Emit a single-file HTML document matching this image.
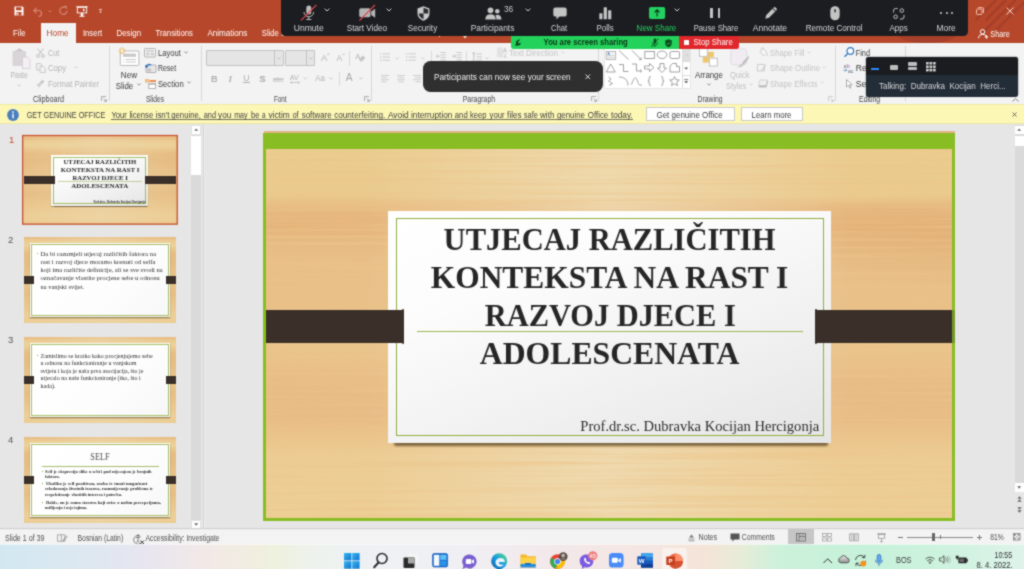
<!DOCTYPE html>
<html lang="hr">
<head>
<meta charset="utf-8">
<title>PowerPoint</title>
<style>
*{box-sizing:border-box;margin:0;padding:0}
html,body{width:1024px;height:569px;overflow:hidden;background:#e6e6e6}
body{font-family:"Liberation Sans",sans-serif;font-size:8.5px;color:#444}
#root{position:relative;width:1024px;height:569px;overflow:hidden;background:#e6e6e6}
#root div,#root svg{position:absolute}
#root svg{overflow:visible}
.t{left:0;top:0;white-space:nowrap;line-height:1;transform-origin:0 0}
#root{will-change:transform;filter:url(#soft)}
.wood{background:
 linear-gradient(90deg,rgba(240,222,184,0) 0%,rgba(240,222,184,0) 15%,rgba(240,222,184,.75) 50%,rgba(240,222,184,0) 85%,rgba(240,222,184,0) 100%),
 radial-gradient(ellipse 30% 13% at 100% 25%,rgba(218,164,106,.32),rgba(218,164,106,0) 100%),
 linear-gradient(180deg,#ebcc8f 0%,#eaca8d 12.6%,#e8bf85 14.6%,#e6b87f 16.5%,#e5b57c 21%,#e7ba82 25%,#e8bf87 30%,#e8c088 43%,#e9c48b 53%,#e9c189 58%,#e8bc85 64%,#e8bc85 73%,#eac48b 78%,#eccc93 83%,#edcf96 100%)}
.woodt{background:
 linear-gradient(90deg,rgba(238,218,178,0) 0%,rgba(238,218,178,.45) 50%,rgba(238,218,178,0) 100%),
 linear-gradient(180deg,#e7b981 0%,#e9c189 2.5%,#ebcd92 5%,#ecd097 10%,#e6bd83 19%,#e5bb81 27%,#e7c188 40%,#e8c48a 53%,#e6be85 66%,#e9c68c 79%,#ecce96 91%,#ebcc92 100%)}
.grain{filter:url(#grain);opacity:.7}
.card{background:linear-gradient(160deg,#ffffff 0%,#fcfcfc 30%,#f1f1f1 65%,#e5e5e5 100%)}
</style>
</head>
<body>
<div id="root">
<svg width="0" height="0" style="left:0;top:0"><filter id="soft" x="0" y="0" width="100%" height="100%" color-interpolation-filters="sRGB"><feConvolveMatrix order="3" kernelMatrix="1 2 1 2 10 2 1 2 1" divisor="22" edgeMode="duplicate" preserveAlpha="true"/></filter><filter id="grain" x="0" y="0" width="100%" height="100%"><feTurbulence type="fractalNoise" baseFrequency="0.003 0.30" numOctaves="3" seed="7" result="n"/><feColorMatrix in="n" type="matrix" values="0 0 0 0 0.84  0 0 0 0 0.56  0 0 0 0 0.26  0 2.4 0 0 -1.05"/></filter></svg>
<div style="left:0px;top:0px;width:1024px;height:43px;background:#b7472a;"></div>
<svg style="left:960px;top:0px;overflow:hidden" width="64" height="43" viewBox="0 0 64 43"><g stroke="#a5402a" stroke-width="2.600" stroke-linecap="butt"><path d="M15.800 20.100L35.900 0M25.500 20.500L46 0M21 34.500L55.500 0M35.500 31L64 2.500"/></g></svg>
<svg style="left:896px;top:36px;" width="62" height="7" viewBox="0 0 62 7"><path d="M2 0h58c-6 5-14 7-29 7s-23-2-29-7z" fill="#a5402a"/></svg>
<div style="left:40.6px;top:23px;width:35.4px;height:21px;background:#f3f3f3;"></div>
<svg style="left:14px;top:6px;" width="10" height="10" viewBox="0 0 10 10"><path d="M0.5 0.5h8l1 1v8h-9z" fill="#fff"/><rect x="2" y="1.3" width="5.5" height="3" fill="#b7472a"/><rect x="2.5" y="6" width="5" height="3.5" fill="#b7472a"/><rect x="3.2" y="6.8" width="1.3" height="2" fill="#fff"/></svg>
<svg style="left:33px;top:6.5px;" width="10" height="9" viewBox="0 0 10 9"><path d="M3.5 0.8L0.8 3.5L3.5 6.2M1 3.5h4.5a3 3 0 0 1 0 6" fill="none" stroke="#d58a76" stroke-width="1.1"/></svg>
<svg style="left:47.5px;top:9.5px;" width="4" height="3" viewBox="0 0 4 3"><path d="M0.5 0.5L2 2L3.5 0.5" fill="none" stroke="#d58a76" stroke-width=".8"/></svg>
<svg style="left:59px;top:6px;" width="9" height="9" viewBox="0 0 9 9"><path d="M6.2 1.6A3.6 3.6 0 1 0 8 4.8" fill="none" stroke="#d58a76" stroke-width="1.1"/><path d="M4.8 0.3h2.7v2.7" fill="none" stroke="#d58a76" stroke-width="1"/></svg>
<svg style="left:76px;top:5.5px;" width="12" height="11" viewBox="0 0 12 11"><path d="M0.3 0.8h11.4" stroke="#fff" stroke-width="1"/><rect x="1.3" y="1.3" width="9.4" height="5.6" fill="none" stroke="#fff" stroke-width=".9"/><path d="M6 7v2M3.5 10.3h5" stroke="#fff" stroke-width="1"/><circle cx="6" cy="8.6" r="1.5" fill="#fff"/><path d="M7 2.6l2.3 1.5L7 5.6z" fill="#fff"/></svg>
<svg style="left:98.5px;top:9px;" width="3" height="5" viewBox="0 0 3 5"><path d="M0.2 0.6h2.6" stroke="#fff" stroke-width=".9"/><path d="M0.2 2.4h2.6L1.5 4z" fill="#fff"/></svg>
<div class="t" style="transform:translate(13.10px,28.90px) scaleX(0.8929);font-size:8.6px;color:#fff;">File</div>
<div class="t" style="transform:translate(46.50px,28.90px) scaleX(0.9674);font-size:8.6px;color:#b7472a;">Home</div>
<div class="t" style="transform:translate(83.00px,28.90px) scaleX(0.8864);font-size:8.6px;color:#fff;">Insert</div>
<div class="t" style="transform:translate(116.40px,28.90px) scaleX(0.9259);font-size:8.6px;color:#fff;">Design</div>
<div class="t" style="transform:translate(155.60px,28.90px) scaleX(0.8952);font-size:8.6px;color:#fff;">Transitions</div>
<div class="t" style="transform:translate(207.40px,28.90px) scaleX(0.9395);font-size:8.6px;color:#fff;">Animations</div>
<div class="t" style="transform:translate(261.80px,28.90px) scaleX(0.8884);font-size:8.6px;color:#fff;">Slide Show</div>
<svg style="left:975.5px;top:6.5px;" width="8" height="8" viewBox="0 0 8 8"><rect x="0.5" y="2" width="5.5" height="5.5" rx="1" fill="none" stroke="#f0c0b0" stroke-width="1"/><path d="M2.2 0.6h4a1.3 1.3 0 0 1 1.3 1.3v4" fill="none" stroke="#f0c0b0" stroke-width="1"/></svg>
<svg style="left:1005.5px;top:6.5px;" width="8" height="8" viewBox="0 0 8 8"><path d="M0.5 0.5l7 7M7.5 0.5l-7 7" stroke="#f4d0c4" stroke-width="1"/></svg>
<svg style="left:978px;top:28.5px;" width="11" height="10" viewBox="0 0 11 10"><circle cx="4.6" cy="2.8" r="2.2" fill="none" stroke="#fff" stroke-width="1"/><path d="M0.6 9.3c0-2.6 1.8-4 4-4s4 1.4 4 4" fill="none" stroke="#fff" stroke-width="1"/><path d="M8.5 6.2v3.4M6.8 7.9h3.4" stroke="#fff" stroke-width="1"/></svg>
<div class="t" style="transform:translate(990.30px,30.20px) scaleX(0.8478);font-size:8.6px;color:#fff;">Share</div>
<div style="left:0px;top:43px;width:1024px;height:61px;background:#f3f3f3;"></div>
<div style="left:109px;top:46px;width:1px;height:55px;background:#d6d6d6;"></div>
<div style="left:200.6px;top:46px;width:1px;height:55px;background:#d6d6d6;"></div>
<div style="left:371.3px;top:46px;width:1px;height:55px;background:#d6d6d6;"></div>
<div style="left:597.5px;top:46px;width:1px;height:55px;background:#d6d6d6;"></div>
<div style="left:835.3px;top:46px;width:1px;height:55px;background:#d6d6d6;"></div>
<div style="left:904.5px;top:46px;width:1px;height:55px;background:#d6d6d6;"></div>
<svg style="left:12px;top:48px;" width="19" height="21" viewBox="0 0 19 21"><rect x="0.5" y="3" width="13.5" height="15" rx="0.8" fill="#d8d4d8"/><path d="M3.5 3.2h7.5v-1.2h-2a1.7 1.7 0 0 0-3.4 0h-2z" fill="#c9c5c9"/><path d="M10.5 9h5l2.5 2.5v9h-7.5z" fill="#f3eff3" stroke="#d0ccd0" stroke-width=".8"/></svg>
<div class="t" style="transform:translate(10.40px,70.60px) scaleX(0.7909);font-size:8.6px;color:#b4b4b4;">Paste</div>
<svg style="left:17px;top:83.5px;" width="4" height="3" viewBox="0 0 4 3"><path d="M0.4 0.5L2 2.2L3.6 0.5" fill="none" stroke="#c0c0c0" stroke-width=".8"/></svg>
<svg style="left:35.5px;top:47.5px;" width="9" height="10" viewBox="0 0 9 10"><path d="M1.6 0.5l5 6.3M7.4 0.5l-5 6.3" stroke="#b8b8b8" stroke-width=".9" fill="none"/><circle cx="2" cy="8" r="1.5" fill="none" stroke="#b8b8b8" stroke-width=".8"/><circle cx="7" cy="8" r="1.5" fill="none" stroke="#b8b8b8" stroke-width=".8"/></svg>
<div class="t" style="transform:translate(47.90px,48.70px) scaleX(0.8500);font-size:8.6px;color:#b4b4b4;">Cut</div>
<svg style="left:35.5px;top:63px;" width="10" height="10" viewBox="0 0 10 10"><path d="M0.5 0.5h4l1.5 1.5v5h-5.500z" fill="#eee" stroke="#c2c2c2" stroke-width=".8"/><path d="M4 3.5h3.500l1.800 1.800v4.200h-5.300z" fill="#f1f1f1" stroke="#c2c2c2" stroke-width=".8"/></svg>
<div class="t" style="transform:translate(47.90px,64.10px) scaleX(0.9050);font-size:8.6px;color:#b4b4b4;">Copy</div>
<svg style="left:73.5px;top:66px;" width="4" height="3" viewBox="0 0 4 3"><path d="M0.4 0.5L2 2.2L3.6 0.5" fill="none" stroke="#c6c6c6" stroke-width=".8"/></svg>
<svg style="left:36px;top:79px;" width="9" height="9" viewBox="0 0 9 9"><path d="M6.5 0.8l1.800 1.800l-2.700 2.700l-1.800-1.800z" fill="#c4c4c4"/><path d="M0.6 6l3-2.400l2 2l-2.600 3z" fill="#cfcfcf"/></svg>
<div class="t" style="transform:translate(47.90px,79.60px) scaleX(0.9000);font-size:8.6px;color:#b4b4b4;">Format Painter</div>
<div class="t" style="transform:translate(33.00px,95.50px) scaleX(0.8857);font-size:8.2px;color:#444;">Clipboard</div>
<svg style="left:101px;top:96px;" width="6" height="6" viewBox="0 0 6 6"><path d="M0.5 5V0.500h4.500" fill="none" stroke="#9a9a9a" stroke-width=".8"/><path d="M2.300 2.300l3 3M5.400 3v2.400h-2.400" fill="none" stroke="#9a9a9a" stroke-width=".8"/></svg>
<svg style="left:117.5px;top:46.5px;" width="22" height="19" viewBox="0 0 22 19"><rect x="2.300" y="4" width="18.600" height="14.500" rx="1" fill="#fff" stroke="#b9b9b9" stroke-width="1"/><rect x="5" y="6.600" width="13" height="3.200" fill="#c8c8c8"/><path d="M5.200 12.500h1M7.500 12.500h10.500M5.200 15h1M7.500 15h10.500" stroke="#c4c4c4" stroke-width=".9"/><g stroke="#eaa43a" stroke-width=".9"><path d="M4 0.300v7M0.500 3.800h7M1.500 1.300l5 5M6.500 1.300l-5 5"/></g><circle cx="4" cy="3.800" r="1.500" fill="#fff6df"/></svg>
<div class="t" style="transform:translate(120.80px,70.80px) scaleX(0.9412);font-size:8.6px;color:#3b3b3b;">New</div>
<div class="t" style="transform:translate(115.70px,81.50px) scaleX(0.9158);font-size:8.6px;color:#3b3b3b;">Slide</div>
<svg style="left:136.5px;top:83.3px;" width="4" height="3" viewBox="0 0 4 3"><path d="M0.400 0.500L2 2.200L3.600 0.500" fill="none" stroke="#777" stroke-width=".8"/></svg>
<svg style="left:144px;top:48px;" width="12" height="9.5" viewBox="0 0 12 9.5"><rect x="0.500" y="0.500" width="11" height="8.500" rx=".8" fill="#f7f7f7" stroke="#a9a9a9" stroke-width=".9"/><rect x="2" y="2" width="8" height="1.500" fill="#c9c9c9"/><rect x="2" y="4.500" width="3.500" height="3" fill="#d0d0d0"/><rect x="6.500" y="4.500" width="3.500" height="3" fill="#d0d0d0"/></svg>
<div class="t" style="transform:translate(157.90px,48.90px) scaleX(0.8885);font-size:8.6px;color:#3b3b3b;">Layout</div>
<svg style="left:183.8px;top:50.7px;" width="4" height="3" viewBox="0 0 4 3"><path d="M0.400 0.500L2 2.200L3.600 0.500" fill="none" stroke="#777" stroke-width=".8"/></svg>
<svg style="left:144.5px;top:62.5px;" width="11.5" height="10" viewBox="0 0 11.5 10"><rect x="1" y="2" width="10" height="7.500" rx=".8" fill="#e8e8e8" stroke="#a9a9a9" stroke-width=".9"/><rect x="2.200" y="5.500" width="4" height="3" fill="#c4c4c4"/><path d="M1 4.500a3 3 0 0 1 5-2.300" fill="none" stroke="#2f6fc0" stroke-width="1.200"/><path d="M0 2l1.200 3l2.600-1.400z" fill="#2f6fc0"/></svg>
<div class="t" style="transform:translate(157.90px,64.10px) scaleX(0.8130);font-size:8.6px;color:#3b3b3b;">Reset</div>
<svg style="left:144.5px;top:78.5px;" width="11.5" height="10" viewBox="0 0 11.5 10"><rect x="0.300" y="0.500" width="3.500" height="2.600" fill="#f6c48a" stroke="#e8a55a" stroke-width=".5"/><rect x="4.500" y="1" width="6.500" height="2" fill="#ee8a50"/><rect x="3.800" y="4.500" width="6.700" height="5" fill="#fff" stroke="#a9a9a9" stroke-width=".9"/><rect x="3.800" y="4.500" width="6.700" height="1.300" fill="#b9b9b9"/></svg>
<div class="t" style="transform:translate(157.90px,79.60px) scaleX(0.9000);font-size:8.6px;color:#3b3b3b;">Section</div>
<svg style="left:186.6px;top:81.3px;" width="4" height="3" viewBox="0 0 4 3"><path d="M0.400 0.500L2 2.200L3.600 0.500" fill="none" stroke="#777" stroke-width=".8"/></svg>
<div class="t" style="transform:translate(145.90px,95.50px) scaleX(0.8091);font-size:8.2px;color:#444;">Slides</div>
<div style="left:206.4px;top:50.2px;width:77.2px;height:15.6px;background:#e5e5e5;border:1px solid #c3c3c3;border-radius:1px"></div>
<div style="left:274.3px;top:50.2px;width:1px;height:15.6px;background:#c3c3c3;"></div>
<svg style="left:276.8px;top:57px;" width="4" height="3" viewBox="0 0 4 3"><path d="M0.400 0.500L2 2.200L3.600 0.500" fill="none" stroke="#b5b5b5" stroke-width=".8"/></svg>
<div style="left:284.7px;top:50.2px;width:30.3px;height:15.6px;background:#e5e5e5;border:1px solid #c3c3c3;border-radius:1px"></div>
<div style="left:306.2px;top:50.2px;width:1px;height:15.6px;background:#c3c3c3;"></div>
<svg style="left:308.5px;top:57px;" width="4" height="3" viewBox="0 0 4 3"><path d="M0.400 0.500L2 2.200L3.600 0.500" fill="none" stroke="#b5b5b5" stroke-width=".8"/></svg>
<div class="t" style="transform:translate(321.00px,53.00px);font-size:9.5px;color:#b4b4b4;">A</div>
<svg style="left:326.5px;top:52.5px;" width="3" height="3" viewBox="0 0 3 3"><path d="M0.300 2L1.500 0.600L2.700 2" fill="none" stroke="#b4b4b4" stroke-width=".7"/></svg>
<div class="t" style="transform:translate(336.50px,54.00px);font-size:8.5px;color:#b4b4b4;">A</div>
<svg style="left:341.5px;top:52.5px;" width="3" height="3" viewBox="0 0 3 3"><path d="M0.300 0.600L1.500 2L2.700 0.600" fill="none" stroke="#b4b4b4" stroke-width=".7"/></svg>
<div style="left:349.3px;top:51px;width:1px;height:14.5px;background:#dadada;"></div>
<div class="t" style="transform:translate(355.20px,52.50px);font-size:7.5px;color:#b4b4b4;">A</div>
<svg style="left:357.5px;top:54.5px;" width="8" height="8" viewBox="0 0 8 8"><path d="M4.800 0.500l2.600 2.600l-4 4l-2.600-2.600z" fill="#c6c6c6"/></svg>
<div class="t" style="transform:translate(211.00px,74.60px);font-size:9.2px;font-weight:700;color:#b0b0b0;">B</div>
<div class="t" style="transform:translate(228.50px,74.60px);font-size:9.2px;font-family:'Liberation Serif',serif;font-weight:700;font-style:italic;color:#b0b0b0;">I</div>
<div class="t" style="transform:translate(243.20px,74.20px);font-size:8.6px;color:#b0b0b0;">U</div>
<div style="left:242.8px;top:82.1px;width:6.8px;height:0.9px;background:#b0b0b0;"></div>
<div class="t" style="transform:translate(259.20px,74.60px);font-size:9.2px;font-weight:700;color:#b0b0b0;text-shadow:0.600px 0.600px 0.5px #ccc;">S</div>
<div class="t" style="transform:translate(273.00px,75.60px) scaleX(0.8750);font-size:7.5px;color:#b8b8b8;text-decoration:line-through;">abc</div>
<div class="t" style="transform:translate(289.80px,74.00px) scaleX(0.9200);font-size:7.8px;color:#b4b4b4;">AV</div>
<svg style="left:289.5px;top:81px;" width="10" height="3" viewBox="0 0 10 3"><path d="M0.500 1.500h9M2 0.300L0.500 1.500L2 2.700M8 0.300L9.500 1.500L8 2.700" fill="none" stroke="#b8b8b8" stroke-width=".7"/></svg>
<svg style="left:303px;top:77px;" width="4" height="3" viewBox="0 0 4 3"><path d="M0.400 0.500L2 2.200L3.600 0.500" fill="none" stroke="#c6c6c6" stroke-width=".8"/></svg>
<div class="t" style="transform:translate(315.20px,74.40px) scaleX(0.8909);font-size:8.8px;color:#b4b4b4;">Aa</div>
<svg style="left:328.5px;top:77px;" width="4" height="3" viewBox="0 0 4 3"><path d="M0.400 0.500L2 2.200L3.600 0.500" fill="none" stroke="#c0c0c0" stroke-width=".8"/></svg>
<div style="left:339.3px;top:72px;width:1px;height:14px;background:#dadada;"></div>
<div class="t" style="transform:translate(345.80px,73.40px);font-size:10.2px;color:#a8a8a8;">A</div>
<svg style="left:359.3px;top:77px;" width="4" height="3" viewBox="0 0 4 3"><path d="M0.400 0.500L2 2.200L3.600 0.500" fill="none" stroke="#c0c0c0" stroke-width=".8"/></svg>
<div class="t" style="transform:translate(274.00px,95.50px) scaleX(0.7647);font-size:8.2px;color:#444;">Font</div>
<svg style="left:364px;top:96px;" width="6" height="6" viewBox="0 0 6 6"><path d="M0.5 5V0.500h4.500" fill="none" stroke="#9a9a9a" stroke-width=".8"/><path d="M2.300 2.300l3 3M5.400 3v2.400h-2.400" fill="none" stroke="#9a9a9a" stroke-width=".8"/></svg>
<div style="left:438.6px;top:36.3px;width:1px;height:1px;background:#f3d9d0;"></div>
<svg style="left:463.3px;top:36.2px;" width="4" height="2.5" viewBox="0 0 4 2.5"><path d="M0 0h4L2 2.400z" fill="#f6e3dc"/></svg>
<svg style="left:380px;top:52.8px;" width="11" height="10" viewBox="0 0 11 10"><rect x="0" y="0.30" width="1.200" height="1.200" fill="#c6c6c6"/><path d="M2.5 0.80h7.5" stroke="#c6c6c6" stroke-width=".9"/><rect x="0" y="3.50" width="1.200" height="1.200" fill="#c6c6c6"/><path d="M2.5 4.00h7.5" stroke="#c6c6c6" stroke-width=".9"/><rect x="0" y="6.70" width="1.200" height="1.200" fill="#c6c6c6"/><path d="M2.5 7.20h7.5" stroke="#c6c6c6" stroke-width=".9"/></svg>
<svg style="left:395.3px;top:57px;" width="4" height="3" viewBox="0 0 4 3"><path d="M0.400 0.500L2 2.200L3.600 0.500" fill="none" stroke="#c6c6c6" stroke-width=".8"/></svg>
<svg style="left:405.5px;top:52.8px;" width="11" height="10" viewBox="0 0 11 10"><rect x="0" y="0.30" width="1.200" height="1.200" fill="#c6c6c6"/><path d="M2.5 0.80h7.5" stroke="#c6c6c6" stroke-width=".9"/><rect x="0" y="3.50" width="1.200" height="1.200" fill="#c6c6c6"/><path d="M2.5 4.00h7.5" stroke="#c6c6c6" stroke-width=".9"/><rect x="0" y="6.70" width="1.200" height="1.200" fill="#c6c6c6"/><path d="M2.5 7.20h7.5" stroke="#c6c6c6" stroke-width=".9"/></svg>
<svg style="left:421.3px;top:57px;" width="4" height="3" viewBox="0 0 4 3"><path d="M0.400 0.500L2 2.200L3.600 0.500" fill="none" stroke="#c6c6c6" stroke-width=".8"/></svg>
<div style="left:431px;top:51px;width:1px;height:14.5px;background:#dadada;"></div>
<svg style="left:381px;top:75px;" width="9" height="8" viewBox="0 0 9 8"><path d="M0 0.50h8" stroke="#c9c9c9" stroke-width=".9"/><path d="M0 2.60h6" stroke="#c9c9c9" stroke-width=".9"/><path d="M0 4.70h8" stroke="#c9c9c9" stroke-width=".9"/><path d="M0 6.80h5.5" stroke="#c9c9c9" stroke-width=".9"/></svg>
<svg style="left:397px;top:75px;" width="9" height="8" viewBox="0 0 9 8"><path d="M0 0.50h8" stroke="#c9c9c9" stroke-width=".9"/><path d="M1 2.60h6" stroke="#c9c9c9" stroke-width=".9"/><path d="M0 4.70h8" stroke="#c9c9c9" stroke-width=".9"/><path d="M1.3 6.80h5.5" stroke="#c9c9c9" stroke-width=".9"/></svg>
<svg style="left:413px;top:75px;" width="9" height="8" viewBox="0 0 9 8"><path d="M0 0.50h8" stroke="#c9c9c9" stroke-width=".9"/><path d="M2 2.60h6" stroke="#c9c9c9" stroke-width=".9"/><path d="M0 4.70h8" stroke="#c9c9c9" stroke-width=".9"/><path d="M2.5 6.80h5.5" stroke="#c9c9c9" stroke-width=".9"/></svg>
<svg style="left:436px;top:52px;" width="10" height="8.5" viewBox="0 0 10 8.5"><path d="M4.500 0.500h5.500M4.500 3h5.500M4.500 5.500h5.500M4.500 8h5.500" stroke="#c6c6c6" stroke-width=".9"/><path d="M3.800 4.200H0.500M2 2.600L0.400 4.200L2 5.800" fill="none" stroke="#b8b8b8" stroke-width=".8"/></svg>
<svg style="left:452px;top:52px;" width="10" height="8.5" viewBox="0 0 10 8.5"><path d="M4.500 0.500h5.500M4.500 3h5.500M4.500 5.500h5.500M4.500 8h5.500" stroke="#c6c6c6" stroke-width=".9"/><path d="M0.200 4.200H3.500M2 2.600L3.600 4.200L2 5.800" fill="none" stroke="#b8b8b8" stroke-width=".8"/></svg>
<div style="left:466.3px;top:51px;width:1px;height:14.5px;background:#dadada;"></div>
<svg style="left:471.5px;top:51.5px;" width="10" height="10.5" viewBox="0 0 10 10.5"><path d="M4.500 2h5.500M4.500 5h5.500M4.500 8h5.500" stroke="#c6c6c6" stroke-width=".9"/><path d="M1.800 0.500v9.500M0.400 2L1.800 0.500L3.200 2M0.400 8.500L1.800 10L3.200 8.500" fill="none" stroke="#b8b8b8" stroke-width=".8"/></svg>
<svg style="left:485.3px;top:57px;" width="4" height="3" viewBox="0 0 4 3"><path d="M0.400 0.500L2 2.200L3.600 0.500" fill="none" stroke="#c6c6c6" stroke-width=".8"/></svg>
<svg style="left:496.5px;top:47px;" width="10" height="11" viewBox="0 0 10 11"><path d="M1 0.500v10M3 0.500v10M5 0.500v10" stroke="#c9c9c9" stroke-width=".8"/><path d="M6.300 5.500l1.700-4.500l1.700 4.500M6.900 4h2.200M8 6.500v4M7 9.300l1 1.200l1-1.200" fill="none" stroke="#c0c0c0" stroke-width=".8"/></svg>
<div class="t" style="transform:translate(509.00px,48.80px) scaleX(0.9423);font-size:8.6px;color:#c4c4c4;">Text Direction</div>
<svg style="left:560.5px;top:50.7px;" width="4" height="3" viewBox="0 0 4 3"><path d="M0.400 0.500L2 2.200L3.600 0.500" fill="none" stroke="#cfcfcf" stroke-width=".8"/></svg>
<svg style="left:497px;top:62px;" width="10" height="10" viewBox="0 0 10 10"><rect x="0.500" y="0.500" width="9" height="9" fill="none" stroke="#c6c6c6" stroke-width=".8" stroke-dasharray="2 1"/><path d="M5 1.500v7M3.800 3L5 1.600L6.200 3M3.800 7L5 8.400L6.200 7" fill="none" stroke="#c0c0c0" stroke-width=".8"/></svg>
<div class="t" style="transform:translate(509.00px,64.10px) scaleX(0.9459);font-size:8.6px;color:#c4c4c4;">Align Text</div>
<svg style="left:547px;top:66px;" width="4" height="3" viewBox="0 0 4 3"><path d="M0.400 0.500L2 2.200L3.600 0.500" fill="none" stroke="#cfcfcf" stroke-width=".8"/></svg>
<svg style="left:497px;top:78px;" width="10" height="9" viewBox="0 0 10 9"><rect x="2.500" y="2.500" width="7" height="6" fill="none" stroke="#c6c6c6" stroke-width=".8"/><path d="M0.500 4l2-2.500l2 2.500z" fill="#c9c9c9"/></svg>
<div class="t" style="transform:translate(509.00px,79.60px) scaleX(0.8947);font-size:8.6px;color:#c4c4c4;">Convert to SmartArt</div>
<svg style="left:580px;top:81.3px;" width="4" height="3" viewBox="0 0 4 3"><path d="M0.400 0.500L2 2.200L3.600 0.500" fill="none" stroke="#cfcfcf" stroke-width=".8"/></svg>
<div class="t" style="transform:translate(462.70px,95.50px) scaleX(0.8500);font-size:8.2px;color:#444;">Paragraph</div>
<svg style="left:590.5px;top:96px;" width="6" height="6" viewBox="0 0 6 6"><path d="M0.5 5V0.500h4.500" fill="none" stroke="#9a9a9a" stroke-width=".8"/><path d="M2.300 2.300l3 3M5.400 3v2.400h-2.400" fill="none" stroke="#9a9a9a" stroke-width=".8"/></svg>
<div style="left:603.5px;top:48px;width:87.5px;height:40.5px;background:#fff;border:1px solid #e6e6e6"></div>
<div style="left:681.5px;top:48px;width:1px;height:40.5px;background:#dcdcdc;"></div>
<div style="left:682.5px;top:49px;width:7.5px;height:12px;background:#e0e0e0;"></div>
<div style="left:682.5px;top:61px;width:7.5px;height:1px;background:#dcdcdc;"></div>
<div style="left:682.5px;top:74.5px;width:7.5px;height:1px;background:#dcdcdc;"></div>
<svg style="left:684.5px;top:53.5px;" width="4" height="3" viewBox="0 0 4 3"><path d="M0.4 2.2L2 0.6L3.6 2.2" fill="none" stroke="#c4c4c4" stroke-width=".8"/></svg>
<svg style="left:684.3px;top:66.5px;" width="4.4" height="3" viewBox="0 0 4.4 3"><path d="M0.2 0.4h4L2.2 2.8z" fill="#666"/></svg>
<svg style="left:684.3px;top:78.5px;" width="4.4" height="5" viewBox="0 0 4.4 5"><path d="M0.2 0.5h4" stroke="#666" stroke-width=".8"/><path d="M0.2 2h4L2.2 4.4z" fill="#666"/></svg>
<svg style="left:603.5px;top:48px;" width="80" height="41" viewBox="0 0 80 41">
<rect x="2.2" y="3.5" width="9.5" height="8" fill="#f4f4f4" stroke="#a8a8a8" stroke-width=".8"/><path d="M3.5 7.5h7M3.500 9.500h7" stroke="#c4c4c4" stroke-width=".7"/><text x="3.600" y="6.600" font-family="Liberation Sans, sans-serif" font-size="3.500" fill="#2f6fc0">A</text>
<path d="M15 2.500l9.500 9" fill="none" stroke="#8a8a8a" stroke-width=".8"/>
<path d="M28 2.500l9 9M37.200 11.700v-2.200M37.200 11.700h-2.200" fill="none" stroke="#8a8a8a" stroke-width=".8"/>
<rect x="40.800" y="3.500" width="9.500" height="7" fill="none" stroke="#8a8a8a" stroke-width=".8"/>
<ellipse cx="58" cy="6.800" rx="4.800" ry="3.800" fill="none" stroke="#8a8a8a" stroke-width=".8"/>
<rect x="66" y="3.500" width="9.500" height="7" rx="1.500" fill="none" stroke="#8a8a8a" stroke-width=".8"/>
<path d="M2.200 24l4.500-8l4.500 8z" fill="none" stroke="#8a8a8a" stroke-width=".8"/>
<path d="M15 16.500h4.500v7h5" fill="none" stroke="#8a8a8a" stroke-width=".8"/>
<path d="M28 16h4.500v7h5M36 21.500l1.600 1.500l-1.600 1.500" fill="none" stroke="#8a8a8a" stroke-width=".8"/>
<path d="M40.500 18h5v-2.500l4.500 4l-4.500 4v-2.500h-5z" fill="none" stroke="#8a8a8a" stroke-width=".8"/>
<path d="M56 15.500h4v4.500h2.500l-4.500 4.500l-4.500-4.500h2.500z" fill="none" stroke="#8a8a8a" stroke-width=".8"/>
<path d="M66 24v-6l2.500-2.500h4v3h3v5.500z" fill="none" stroke="#8a8a8a" stroke-width=".8"/>
<path d="M4.500 29l2.500 2l-2.500 2l4 2.500l-3 1.500M5.500 37.500l1.500-1.500" fill="none" stroke="#8a8a8a" stroke-width=".8"/>
<path d="M15 29c5 0 9 2.500 9 8.500" fill="none" stroke="#8a8a8a" stroke-width=".8"/>
<path d="M27.500 36.500c3.500-10 5-7 6.500-2c1 3 2 2.800 4 2.500" fill="none" stroke="#8a8a8a" stroke-width=".8"/>
<path d="M47 28.500c-2 0-1.800 1-1.800 2.500s0 2-1.300 2c1.300 0 1.300 0.500 1.300 2s-0.200 2.500 1.800 2.500" fill="none" stroke="#8a8a8a" stroke-width=".8"/>
<path d="M57 28.500c2 0 1.800 1 1.800 2.500s0 2 1.300 2c-1.300 0-1.300 0.500-1.300 2s0.200 2.500-1.800 2.500" fill="none" stroke="#8a8a8a" stroke-width=".8"/>
<path d="M70.500 28.500l1.400 3.200l3.400 0.300l-2.600 2.200l0.800 3.400l-3-1.800l-3 1.800l0.800-3.400l-2.600-2.200l3.400-0.300z" fill="none" stroke="#8a8a8a" stroke-width=".8"/>
</svg>
<svg style="left:699px;top:48.3px;" width="20" height="19" viewBox="0 0 20 19"><rect x="8.800" y="3.800" width="6" height="5.600" fill="#edc56c"/><rect x="3.800" y="9" width="6" height="5.600" fill="#edc56c"/><rect x="0.500" y="0.500" width="7.800" height="7.800" fill="#fff" stroke="#b4b4b4" stroke-width=".8"/><rect x="10.500" y="10.200" width="7.800" height="7.800" fill="#fff" stroke="#b4b4b4" stroke-width=".8"/></svg>
<div class="t" style="transform:translate(695.00px,70.60px) scaleX(0.9100);font-size:8.6px;color:#3b3b3b;">Arrange</div>
<svg style="left:707px;top:83.3px;" width="4" height="3" viewBox="0 0 4 3"><path d="M0.4 0.5L2 2.2L3.6 0.5" fill="none" stroke="#777" stroke-width=".8"/></svg>
<svg style="left:730px;top:48px;" width="20" height="21" viewBox="0 0 20 21"><rect x="0.800" y="0.800" width="16" height="16" rx="3" fill="#f0ecf1" stroke="#dcd8dd" stroke-width=".8"/><path d="M19.500 7.500c-3 2-5.500 5-7.500 8l1.500 1.200c2.500-2.500 5-5.500 6-9.200z" fill="#bcbcbc"/><path d="M12 15.500l1.500 1.200c-1.500 2.500-4.500 3-7 2.500c2.500-0.500 3.500-2 5.500-3.700z" fill="#c6c6c6"/></svg>
<div class="t" style="transform:translate(729.90px,70.60px) scaleX(0.8955);font-size:8.6px;color:#c0c0c0;">Quick</div>
<div class="t" style="transform:translate(726.00px,81.50px) scaleX(0.8696);font-size:8.6px;color:#c0c0c0;">Styles</div>
<svg style="left:748.6px;top:83.3px;" width="4" height="3" viewBox="0 0 4 3"><path d="M0.4 0.5L2 2.2L3.6 0.5" fill="none" stroke="#cccccc" stroke-width=".8"/></svg>
<svg style="left:758px;top:47px;" width="10" height="10" viewBox="0 0 10 10"><path d="M2 4.500l3.500-3l3.500 4l-3.500 3.500z" fill="#f6f6f6" stroke="#c2c2c2" stroke-width=".8"/><path d="M3 2.500c0-2.500 2.500-2.500 2.500-0.500" fill="none" stroke="#c2c2c2" stroke-width=".7"/><path d="M9.300 6.500c0.800 1.200 0.800 2 0 2.300c-0.800-0.300-0.800-1.100 0-2.300z" fill="#c8c8c8"/></svg>
<div class="t" style="transform:translate(770.00px,48.80px) scaleX(0.9000);font-size:8.6px;color:#c4c4c4;">Shape Fill</div>
<svg style="left:806.8px;top:50.7px;" width="4" height="3" viewBox="0 0 4 3"><path d="M0.4 0.5L2 2.2L3.6 0.5" fill="none" stroke="#d0d0d0" stroke-width=".8"/></svg>
<svg style="left:757px;top:62.5px;" width="11" height="9" viewBox="0 0 11 9"><path d="M0.500 1.500h7v6.500h-7z" fill="none" stroke="#c4c4c4" stroke-width=".8"/><path d="M10 0.500l-5 5.500l-1 1.800l1.800-1z" fill="#c0c0c0"/></svg>
<div class="t" style="transform:translate(770.00px,64.10px) scaleX(0.9185);font-size:8.6px;color:#c4c4c4;">Shape Outline</div>
<svg style="left:822px;top:66px;" width="4" height="3" viewBox="0 0 4 3"><path d="M0.4 0.5L2 2.2L3.6 0.5" fill="none" stroke="#d0d0d0" stroke-width=".8"/></svg>
<svg style="left:757.5px;top:78.5px;" width="10.5" height="9.5" viewBox="0 0 10.5 9.5"><path d="M2 1h7.500l-1.500 5.500h-7.500z" fill="#f1eff2" stroke="#c8c8c8" stroke-width=".7"/><path d="M0.500 6.500h7.500l1.500-5.500l0.500 2l-1.500 5.500h-7.500z" fill="#bdbdbd"/></svg>
<div class="t" style="transform:translate(770.00px,79.60px) scaleX(0.8906);font-size:8.6px;color:#c4c4c4;">Shape Effects</div>
<svg style="left:820px;top:81.3px;" width="4" height="3" viewBox="0 0 4 3"><path d="M0.4 0.5L2 2.2L3.6 0.5" fill="none" stroke="#d0d0d0" stroke-width=".8"/></svg>
<div class="t" style="transform:translate(697.50px,95.50px) scaleX(0.8333);font-size:8.2px;color:#444;">Drawing</div>
<svg style="left:827.5px;top:96px;" width="6" height="6" viewBox="0 0 6 6"><path d="M0.5 5V0.5h4.5" fill="none" stroke="#c4c4c4" stroke-width=".8"/><path d="M2.3 2.3l3 3M5.400 3v2.400h-2.400" fill="none" stroke="#c4c4c4" stroke-width=".8"/></svg>
<svg style="left:843.5px;top:47.3px;" width="10.5" height="10.5" viewBox="0 0 10.5 10.5"><circle cx="6.300" cy="4" r="3.300" fill="#fff" stroke="#2e74c2" stroke-width="1.200"/><path d="M3.800 6.500L0.500 9.800" stroke="#2e74c2" stroke-width="1.300"/></svg>
<div class="t" style="transform:translate(855.80px,48.70px) scaleX(0.8471);font-size:8.6px;color:#3b3b3b;">Find</div>
<svg style="left:843px;top:62.5px;" width="11" height="10" viewBox="0 0 11 10"><text x="0.500" y="4.800" font-family="Liberation Sans, sans-serif" font-size="5.500" fill="#777">a</text><text x="3.700" y="4.800" font-family="Liberation Sans, sans-serif" font-size="5.500" fill="#9a58c0">b</text><text x="4.800" y="9.500" font-family="Liberation Sans, sans-serif" font-size="5.500" fill="#777">a</text><text x="7.800" y="9.500" font-family="Liberation Sans, sans-serif" font-size="5.500" fill="#2e74c2">c</text><path d="M0.500 7.200h3M2.500 6l1.200 1.200l-1.200 1.200" fill="none" stroke="#2e74c2" stroke-width=".7"/></svg>
<div class="t" style="transform:translate(855.80px,64.10px);font-size:8.6px;color:#3b3b3b;">Replace</div>
<svg style="left:845.5px;top:78.5px;" width="7" height="10" viewBox="0 0 7 10"><path d="M0.500 0.500v7.500l2-1.800l1.500 3l1-0.500l-1.400-2.900h2.600z" fill="#fff" stroke="#999" stroke-width=".8"/></svg>
<div class="t" style="transform:translate(855.80px,79.60px);font-size:8.6px;color:#3b3b3b;">Select</div>
<div class="t" style="transform:translate(859.00px,95.50px) scaleX(0.8480);font-size:8.2px;color:#444;">Editing</div>
<svg style="left:1011.5px;top:97.5px;" width="7" height="4" viewBox="0 0 7 4"><path d="M0.500 3.500L3.500 0.600L6.500 3.500" fill="none" stroke="#777" stroke-width=".9"/></svg>
<div style="left:0px;top:104px;width:1024px;height:20px;background:#fdf7b6;border-top:1px solid #f0eaa5;border-bottom:1px solid #ece6a2"></div>
<svg style="left:7.4px;top:108.7px;" width="12" height="12" viewBox="0 0 12 12"><circle cx="6" cy="6" r="5.900" fill="#4a7fbd"/><rect x="5.300" y="4.800" width="1.400" height="4.500" fill="#fff"/><circle cx="6" cy="3.100" r=".9" fill="#fff"/></svg>
<div class="t" style="transform:translate(26.70px,110.80px) scaleX(0.7909);font-size:9.2px;color:#3c3c3c;">GET GENUINE OFFICE</div>
<div class="t" style="transform:translate(111.50px,111.00px) scaleX(0.8750);font-size:8.7px;color:#3c3c3c;">Your</div>
<div class="t" style="transform:translate(129.40px,111.00px) scaleX(0.8778);font-size:8.7px;color:#3c3c3c;">license</div>
<div class="t" style="transform:translate(155.60px,111.00px) scaleX(0.9200);font-size:8.7px;color:#3c3c3c;">isn't</div>
<div class="t" style="transform:translate(171.25px,111.00px) scaleX(0.8894);font-size:8.7px;color:#3c3c3c;">genuine,</div>
<div class="t" style="transform:translate(203.75px,111.00px) scaleX(0.8464);font-size:8.7px;color:#3c3c3c;">and</div>
<div class="t" style="transform:translate(218.10px,111.00px) scaleX(0.9393);font-size:8.7px;color:#3c3c3c;">you</div>
<div class="t" style="transform:translate(234.25px,111.00px) scaleX(0.8088);font-size:8.7px;color:#3c3c3c;">may</div>
<div class="t" style="transform:translate(251.10px,111.00px) scaleX(0.8778);font-size:8.7px;color:#3c3c3c;">be</div>
<div class="t" style="transform:translate(262.00px,111.00px) scaleX(0.7500);font-size:8.7px;color:#3c3c3c;">a</div>
<div class="t" style="transform:translate(268.40px,111.00px) scaleX(0.9591);font-size:8.7px;color:#3c3c3c;">victim</div>
<div class="t" style="transform:translate(292.40px,111.00px) scaleX(0.8563);font-size:8.7px;color:#3c3c3c;">of</div>
<div class="t" style="transform:translate(301.75px,111.00px) scaleX(0.9091);font-size:8.7px;color:#3c3c3c;">software</div>
<div class="t" style="transform:translate(334.25px,111.00px) scaleX(0.9352);font-size:8.7px;color:#3c3c3c;">counterfeiting.</div>
<div class="t" style="transform:translate(387.90px,111.00px) scaleX(0.9690);font-size:8.7px;color:#3c3c3c;">Avoid</div>
<div class="t" style="transform:translate(411.00px,111.00px) scaleX(0.9535);font-size:8.7px;color:#3c3c3c;">interruption</div>
<div class="t" style="transform:translate(454.75px,111.00px) scaleX(0.8929);font-size:8.7px;color:#3c3c3c;">and</div>
<div class="t" style="transform:translate(470.00px,111.00px) scaleX(0.8737);font-size:8.7px;color:#3c3c3c;">keep</div>
<div class="t" style="transform:translate(489.60px,111.00px) scaleX(0.8824);font-size:8.7px;color:#3c3c3c;">your</div>
<div class="t" style="transform:translate(507.10px,111.00px) scaleX(0.9433);font-size:8.7px;color:#3c3c3c;">files</div>
<div class="t" style="transform:translate(523.75px,111.00px) scaleX(0.8594);font-size:8.7px;color:#3c3c3c;">safe</div>
<div class="t" style="transform:translate(540.00px,111.00px) scaleX(0.9333);font-size:8.7px;color:#3c3c3c;">with</div>
<div class="t" style="transform:translate(556.90px,111.00px) scaleX(0.9065);font-size:8.7px;color:#3c3c3c;">genuine</div>
<div class="t" style="transform:translate(587.75px,111.00px) scaleX(0.9091);font-size:8.7px;color:#3c3c3c;">Office</div>
<div class="t" style="transform:translate(610.90px,111.00px) scaleX(0.9500);font-size:8.7px;color:#3c3c3c;">today.</div>
<div style="left:111.3px;top:118.9px;width:521.6px;height:0.8px;background:rgba(60,60,60,.75);"></div>
<div style="left:646px;top:106.6px;width:88.5px;height:14.8px;background:#fff;border:1px solid #c9c9c9"></div>
<div class="t" style="transform:translate(656.50px,110.70px) scaleX(0.9366);font-size:8.5px;color:#3c3c3c;">Get genuine Office</div>
<div style="left:741px;top:106.6px;width:61.5px;height:14.8px;background:#fff;border:1px solid #c9c9c9"></div>
<div class="t" style="transform:translate(751.60px,110.70px) scaleX(0.9163);font-size:8.5px;color:#3c3c3c;">Learn more</div>
<svg style="left:1012px;top:112px;" width="5" height="5" viewBox="0 0 5 5"><path d="M0.500 0.500l4 4M4.500 0.500l-4 4" stroke="#555" stroke-width=".9"/></svg>
<div style="left:190.8px;top:125px;width:9.8px;height:404px;background:#dadada;"></div>
<div style="left:190.8px;top:125px;width:9.8px;height:9.5px;background:#fff;border:1px solid #e2e2e2"></div>
<svg style="left:193.5px;top:128px;" width="4.4" height="3" viewBox="0 0 4.4 3"><path d="M0.200 2.800h4L2.200 0.400z" fill="#666"/></svg>
<div style="left:190.8px;top:136px;width:9.8px;height:38.5px;background:#fff;"></div>
<div style="left:190.8px;top:519.5px;width:9.8px;height:9.3px;background:#fff;border:1px solid #e2e2e2"></div>
<svg style="left:193.5px;top:523px;" width="4.4" height="3" viewBox="0 0 4.4 3"><path d="M0.200 0.300h4L2.200 2.700z" fill="#666"/></svg>
<div style="left:203px;top:124px;width:1.2px;height:405px;background:#d4d4d4;"></div>
<div style="left:204.2px;top:124px;width:1px;height:405px;background:#ececec;"></div>
<div style="left:1014.7px;top:125px;width:10px;height:366.5px;background:#dadada;"></div>
<div style="left:1015px;top:126px;width:9px;height:8.3px;background:#fff;"></div>
<svg style="left:1017px;top:128px;" width="4.4" height="3" viewBox="0 0 4.4 3"><path d="M0.200 2.800h4L2.200 0.400z" fill="#666"/></svg>
<div style="left:1015px;top:136px;width:9px;height:10px;background:#fff;"></div>
<div style="left:1015px;top:482.5px;width:9px;height:9px;background:#fff;"></div>
<svg style="left:1017px;top:485.5px;" width="4.4" height="3" viewBox="0 0 4.4 3"><path d="M0.200 0.300h4L2.200 2.700z" fill="#666"/></svg>
<svg style="left:1016.5px;top:495.5px;" width="5" height="6" viewBox="0 0 5 6"><path d="M0.300 2.800h4.400L2.500 0.300zM0.300 5.800h4.400L2.500 3.300z" fill="#666"/></svg>
<svg style="left:1016.5px;top:506.5px;" width="5" height="6" viewBox="0 0 5 6"><path d="M0.300 0.300h4.400L2.500 2.800zM0.300 3.300h4.400L2.500 5.800z" fill="#666"/></svg>
<svg style="left:21px;top:134px;" width="158" height="92" viewBox="0 0 158 92"><rect x="1" y="0.9" width="155.9" height="89.9" fill="#c9512f"/></svg>
<svg style="left:21px;top:134px;" width="158" height="92" viewBox="0 0 158 92"><rect x="2.35" y="2.25" width="153.2" height="87.2" fill="#ebcd92"/></svg>
<div class="wood woodt" style="left:24px;top:137px;width:152px;height:86px"></div>
<div class="card" style="left:51.400px;top:154.800px;width:96.600px;height:51.100px;box-shadow:0 .6px 1px rgba(60,40,10,.6)"></div>
<div style="left:53.2px;top:156.6px;width:93px;height:47.5px;background:transparent;border:.6px solid rgba(143,174,62,.8)"></div>
<div style="left:23.6px;top:176.4px;width:31px;height:7.7px;background:#3a3029;"></div>
<div style="left:145px;top:176.4px;width:31.3px;height:7.7px;background:#3a3029;"></div>
<div style="left:58px;top:180.8px;width:84px;height:0.7px;background:rgba(143,174,62,.5);"></div>
<div class="t" style="transform:translate(63.50px,158.60px);font-size:6.7px;font-family:'Liberation Serif',serif;font-weight:700;color:#2a2a2a;">UTJECAJ RAZLIČITIH</div>
<div class="t" style="transform:translate(60.70px,166.70px) scaleX(1.0342);font-size:6.7px;font-family:'Liberation Serif',serif;font-weight:700;color:#2a2a2a;">KONTEKSTA NA RAST I</div>
<div class="t" style="transform:translate(72.50px,175.00px);font-size:6.7px;font-family:'Liberation Serif',serif;font-weight:700;color:#2a2a2a;">RAZVOJ DJECE I</div>
<div class="t" style="transform:translate(71.30px,183.00px) scaleX(1.0400);font-size:6.7px;font-family:'Liberation Serif',serif;font-weight:700;color:#2a2a2a;">ADOLESCENATA</div>
<div class="t" style="transform:translate(93.50px,201.30px) scaleX(0.9545);font-size:3.1px;font-family:'Liberation Serif',serif;font-weight:700;color:#333;">Prof.dr.sc. Dubravka Kocijan Hercigonja</div>
<div class="t" style="transform:translate(9.00px,135.30px);font-size:9.5px;color:#c8482c;">1</div>
<div class="wood woodt" style="left:23.700px;top:236.6px;width:152.300px;height:86px"></div>
<div class="card" style="left:30.200px;top:243.0px;width:139.500px;height:73.900px;background:linear-gradient(135deg,#fff 0%,#fdfdfd 60%,#f7f7f7 100%);box-shadow:0 .8px 1.200px rgba(60,40,10,.6)"></div>
<div style="left:31.3px;top:244.1px;width:137.3px;height:71.7px;background:transparent;border:.6px solid rgba(143,174,62,.8)"></div>
<div style="left:23.7px;top:276.3px;width:10.5px;height:7.4px;background:#3a3029;"></div>
<div style="left:166px;top:276.3px;width:10px;height:7.4px;background:#3a3029;"></div>
<div class="t" style="transform:translate(8.00px,235.30px);font-size:9.5px;color:#555;">2</div>
<div style="left:37.3px;top:252.5px;width:1px;height:1px;background:#8fae3e;"></div>
<div class="t" style="transform:translate(40.50px,251.80px) scaleX(1.2211);font-size:5.5px;font-family:'Liberation Serif',serif;color:#333;">Da bi razumjeli  utjecaj različitih faktora na</div>
<div class="t" style="transform:translate(40.50px,260.02px) scaleX(1.2202);font-size:5.5px;font-family:'Liberation Serif',serif;color:#333;">rast i razvoj djece moramo krenuti od selfa</div>
<div class="t" style="transform:translate(40.50px,268.24px) scaleX(1.1961);font-size:5.5px;font-family:'Liberation Serif',serif;color:#333;">koji ima različite definicije, ali se sve svodi na</div>
<div class="t" style="transform:translate(40.50px,276.46px) scaleX(1.2237);font-size:5.5px;font-family:'Liberation Serif',serif;color:#333;">označavanje vlastite procjene sebe u odnosu</div>
<div class="t" style="transform:translate(40.50px,284.68px) scaleX(1.1757);font-size:5.5px;font-family:'Liberation Serif',serif;color:#333;">na vanjski svijet.</div>
<div class="wood woodt" style="left:23.700px;top:336.6px;width:152.300px;height:86px"></div>
<div class="card" style="left:30.200px;top:343.0px;width:139.500px;height:73.900px;background:linear-gradient(135deg,#fff 0%,#fdfdfd 60%,#f7f7f7 100%);box-shadow:0 .8px 1.200px rgba(60,40,10,.6)"></div>
<div style="left:31.3px;top:344.1px;width:137.3px;height:71.7px;background:transparent;border:.6px solid rgba(143,174,62,.8)"></div>
<div style="left:23.7px;top:376.3px;width:10.5px;height:7.4px;background:#3a3029;"></div>
<div style="left:166px;top:376.3px;width:10px;height:7.4px;background:#3a3029;"></div>
<div class="t" style="transform:translate(8.00px,335.30px);font-size:9.5px;color:#555;">3</div>
<div style="left:37.3px;top:355px;width:1px;height:1px;background:#8fae3e;"></div>
<div class="t" style="transform:translate(40.50px,353.80px) scaleX(1.1936);font-size:5.1px;font-family:'Liberation Serif',serif;color:#333;">Zamislimo se kratko kako procjenjujemo sebe</div>
<div class="t" style="transform:translate(40.50px,361.35px) scaleX(1.1938);font-size:5.1px;font-family:'Liberation Serif',serif;color:#333;">u odnosu na funkcioniranje u vanjskom</div>
<div class="t" style="transform:translate(40.50px,368.90px) scaleX(1.1670);font-size:5.1px;font-family:'Liberation Serif',serif;color:#333;">svijetu i koja je naša prva asocijacija, što je</div>
<div class="t" style="transform:translate(40.50px,376.45px) scaleX(1.1905);font-size:5.1px;font-family:'Liberation Serif',serif;color:#333;">utjecalo na naše funkcioniranje (tko, što i</div>
<div class="t" style="transform:translate(40.50px,384.00px) scaleX(1.1917);font-size:5.1px;font-family:'Liberation Serif',serif;color:#333;">kada).</div>
<div class="wood woodt" style="left:23.700px;top:436.6px;width:152.300px;height:86px"></div>
<div class="card" style="left:30.200px;top:443.0px;width:139.500px;height:73.900px;background:linear-gradient(135deg,#fff 0%,#fdfdfd 60%,#f7f7f7 100%);box-shadow:0 .8px 1.200px rgba(60,40,10,.6)"></div>
<div style="left:31.3px;top:444.1px;width:137.3px;height:71.7px;background:transparent;border:.6px solid rgba(143,174,62,.8)"></div>
<div style="left:23.7px;top:476.3px;width:10.5px;height:7.4px;background:#3a3029;"></div>
<div style="left:166px;top:476.3px;width:10px;height:7.4px;background:#3a3029;"></div>
<div class="t" style="transform:translate(8.00px,435.30px);font-size:9.5px;color:#555;">4</div>
<div class="t" style="transform:translate(90.30px,452.90px) scaleX(0.8864);font-size:9.3px;font-family:'Liberation Serif',serif;color:#4a4a4a;">SELF</div>
<div style="left:42px;top:466.2px;width:117px;height:0.8px;background:#a8bd6a;"></div>
<div class="t" style="transform:translate(45.00px,470.60px) scaleX(1.1703);font-size:3.9px;font-family:'Liberation Serif',serif;font-weight:700;color:#333;">Self je ekspresija slike o sebi i pod utjecajem je brojnih</div>
<div style="left:41.5px;top:470.6px;width:0.8px;height:0.8px;background:#8fae3e;"></div>
<div class="t" style="transform:translate(45.00px,475.70px) scaleX(1.1154);font-size:3.9px;font-family:'Liberation Serif',serif;font-weight:700;color:#333;">faktora.</div>
<div class="t" style="transform:translate(46.00px,483.20px) scaleX(1.2000);font-size:3.9px;font-family:'Liberation Serif',serif;font-weight:700;color:#333;">Ukoliko je self pozitivan, osoba će imati mogućnost</div>
<div style="left:41.5px;top:483.2px;width:0.8px;height:0.8px;background:#8fae3e;"></div>
<div class="t" style="transform:translate(45.00px,488.40px) scaleX(1.1453);font-size:3.9px;font-family:'Liberation Serif',serif;font-weight:700;color:#333;">svladavanja životnih izazova, razumijevanje problema te</div>
<div class="t" style="transform:translate(45.00px,493.80px) scaleX(1.1397);font-size:3.9px;font-family:'Liberation Serif',serif;font-weight:700;color:#333;">respektiranje vlastitih interesa i potreba.</div>
<div class="t" style="transform:translate(46.00px,501.80px) scaleX(1.1735);font-size:3.9px;font-family:'Liberation Serif',serif;font-weight:700;color:#333;">Dakle, on je suma stavova koji ovise o našim percepcijama,</div>
<div style="left:41.5px;top:501.8px;width:0.8px;height:0.8px;background:#8fae3e;"></div>
<div class="t" style="transform:translate(45.00px,506.80px) scaleX(1.1351);font-size:3.9px;font-family:'Liberation Serif',serif;font-weight:700;color:#333;">mišljenju i osjećajima.</div>
<div style="left:264px;top:131px;width:691px;height:2.5px;background:#e4b486;"></div>
<div style="left:263px;top:133px;width:692px;height:388.3px;background:#88bd23;"></div>
<div class="wood" style="left:266.1px;top:149.3px;width:685.8px;height:368.6px"></div>
<div class="grain" style="left:266px;top:149px;width:686px;height:369px"></div>
<div style="left:266px;top:310.3px;width:136px;height:32.5px;background:#3a3029;border-radius:0 1px 1px 0"></div>
<div style="left:401.5px;top:308.8px;width:2.3px;height:35.5px;background:#3a3029;border-radius:1px"></div>
<div style="left:817px;top:310.3px;width:138.3px;height:32.5px;background:#3a3029;"></div>
<div style="left:815.2px;top:308.8px;width:2.3px;height:35.5px;background:#3a3029;border-radius:1px"></div>
<div style="left:952px;top:310.3px;width:3px;height:32.5px;background:rgba(136,189,35,.75);"></div>
<div style="left:393.5px;top:440px;width:434px;height:5.6px;background:rgba(85,65,30,.75);filter:blur(1.1px);border-radius:2px"></div>
<div class="card" style="left:388.300px;top:211px;width:443px;height:232px"></div>
<div style="left:395.7px;top:218px;width:428px;height:217.7px;background:transparent;border:1px solid #8fae3e"></div>
<div style="left:266px;top:310.3px;width:136px;height:32.5px;background:#3a3029;"></div>
<div style="left:401.5px;top:308.8px;width:2.3px;height:35.5px;background:#3a3029;border-radius:1px"></div>
<div style="left:815.2px;top:308.8px;width:2.3px;height:35.5px;background:#3a3029;border-radius:1px"></div>
<div style="left:817px;top:310.3px;width:14.5px;height:32.5px;background:#3a3029;"></div>
<div style="left:417px;top:330.5px;width:386px;height:1.3px;background:#9db756;"></div>
<div class="t" style="transform:translate(443.60px,223.60px) scaleX(0.9794);font-size:31.2px;font-family:'Liberation Serif',serif;font-weight:700;color:#262626;">UTJECAJ RAZLIČITIH</div>
<div class="t" style="transform:translate(430.80px,261.60px) scaleX(1.0070);font-size:31.2px;font-family:'Liberation Serif',serif;font-weight:700;color:#262626;">KONTEKSTA NA RAST I</div>
<div class="t" style="transform:translate(484.80px,299.60px) scaleX(0.9743);font-size:31.2px;font-family:'Liberation Serif',serif;font-weight:700;color:#262626;">RAZVOJ DJECE I</div>
<div class="t" style="transform:translate(479.80px,337.60px) scaleX(1.0165);font-size:31.2px;font-family:'Liberation Serif',serif;font-weight:700;color:#262626;">ADOLESCENATA</div>
<div class="t" style="transform:translate(580.30px,418.70px) scaleX(1.0279);font-size:14.2px;font-family:'Liberation Serif',serif;color:#2e2e2e;">Prof.dr.sc. Dubravka Kocijan Hercigonja</div>
<div style="left:0px;top:528.3px;width:1024px;height:1.1px;background:#d0d0d0;"></div>
<div style="left:0px;top:529.4px;width:1024px;height:14.6px;background:#f3f3f3;"></div>
<div style="left:0px;top:529.4px;width:1024px;height:1px;background:#ededed;"></div>
<div class="t" style="transform:translate(5.00px,533.60px) scaleX(0.8362);font-size:8.5px;color:#505050;">Slide 1 of 39</div>
<svg style="left:56.5px;top:534px;" width="10" height="8" viewBox="0 0 10 8"><path d="M0.500 0.800h3.800v6.500h-3.800zM4.300 0.800h3.500v6.500h-3.500" fill="none" stroke="#8a8a8a" stroke-width=".7"/><path d="M9.500 1.500l-3 4l-0.500 1.500l1.500-0.800l3-4" fill="none" stroke="#8a8a8a" stroke-width=".7"/></svg>
<div class="t" style="transform:translate(77.60px,533.60px) scaleX(0.7965);font-size:8.5px;color:#505050;">Bosnian (Latin)</div>
<svg style="left:134px;top:533.5px;" width="11" height="10" viewBox="0 0 11 10"><circle cx="4" cy="1.600" r="1" fill="#555"/><path d="M6.500 2.300a4.300 4.300 0 1 0 1 6" fill="none" stroke="#666" stroke-width=".8"/><path d="M1.800 3.500h4.500M4 3.500v3l-1.500 2M4 6.500l1.500 2" fill="none" stroke="#555" stroke-width=".7"/><path d="M6.500 6.500l3.500 3.500M10 6.500l-3.500 3.500" stroke="#333" stroke-width="1"/></svg>
<div class="t" style="transform:translate(145.50px,533.60px) scaleX(0.8022);font-size:8.5px;color:#505050;">Accessibility: Investigate</div>
<svg style="left:688px;top:533.5px;" width="7" height="8" viewBox="0 0 7 8"><path d="M3.500 0.500l2.500 3h-5z" fill="#777"/><path d="M0.500 5h6M0.500 6.800h6" stroke="#888" stroke-width=".8"/></svg>
<div class="t" style="transform:translate(698.50px,533.40px) scaleX(0.8409);font-size:8.5px;color:#505050;">Notes</div>
<svg style="left:730.3px;top:533px;" width="10" height="9" viewBox="0 0 10 9"><path d="M0.500 0.500h9v6h-5l-2 2v-2h-2z" fill="#555"/></svg>
<div class="t" style="transform:translate(741.80px,533.40px) scaleX(0.8024);font-size:8.5px;color:#505050;">Comments</div>
<div style="left:787.8px;top:529.3px;width:26.4px;height:14.7px;background:#c6c6c6;"></div>
<svg style="left:796px;top:533px;" width="10" height="8.5" viewBox="0 0 10 8.5"><rect x="0.500" y="0.500" width="9" height="7.500" fill="none" stroke="#666" stroke-width=".8"/><path d="M3 0.500v7.500M3 3.500h6.500" stroke="#666" stroke-width=".8"/><path d="M4.500 2h3.500M4.500 5.500h3.500" stroke="#888" stroke-width=".6"/></svg>
<svg style="left:822.4px;top:533px;" width="10" height="8.5" viewBox="0 0 10 8.5"><rect x="0.400" y="0.400" width="3.800" height="3" fill="none" stroke="#9a9a9a" stroke-width=".7"/><rect x="5.600" y="0.400" width="3.800" height="3" fill="none" stroke="#9a9a9a" stroke-width=".7"/><rect x="0.400" y="5" width="3.800" height="3" fill="none" stroke="#9a9a9a" stroke-width=".7"/><rect x="5.600" y="5" width="3.800" height="3" fill="none" stroke="#9a9a9a" stroke-width=".7"/></svg>
<svg style="left:849px;top:533px;" width="10" height="8.5" viewBox="0 0 10 8.5"><path d="M0.500 0.800h4.300v7h-4.300zM5.200 0.800h4.300v7h-4.300z" fill="#e2e2e2" stroke="#9a9a9a" stroke-width=".7"/><path d="M2.600 1v6.500M7.300 1v6.500" stroke="#b0b0b0" stroke-width=".6"/></svg>
<svg style="left:876.5px;top:532.5px;" width="9" height="9.5" viewBox="0 0 9 9.5"><path d="M0.300 0.800h8.400" stroke="#8a8a8a" stroke-width=".8"/><rect x="1.300" y="1.300" width="6.400" height="4" fill="none" stroke="#8a8a8a" stroke-width=".7"/><path d="M4.500 5.500v3M3 8.800h3" stroke="#8a8a8a" stroke-width=".7"/></svg>
<div style="left:898.3px;top:536.7px;width:4.5px;height:0.9px;background:#777;"></div>
<div style="left:906.7px;top:536.8px;width:66.5px;height:0.8px;background:#8a8a8a;"></div>
<div style="left:931.5px;top:532.8px;width:3px;height:8.6px;background:#666;border-radius:.5px"></div>
<div style="left:939.7px;top:535.3px;width:0.8px;height:3.8px;background:#777;"></div>
<div style="left:977px;top:536.7px;width:5px;height:0.9px;background:#777;"></div>
<div style="left:979.05px;top:534.7px;width:0.9px;height:5px;background:#777;"></div>
<div class="t" style="transform:translate(990.30px,533.90px) scaleX(0.8313);font-size:8.2px;color:#505050;">81%</div>
<svg style="left:1013.3px;top:533px;" width="7.5" height="7.5" viewBox="0 0 7.5 7.5"><rect x="0.400" y="0.400" width="6.700" height="6.700" fill="none" stroke="#777" stroke-width=".7"/><path d="M1.500 3v-1.500h1.500M4.500 1.500h1.500v1.500M6 4.500v1.500h-1.500M3 6h-1.500v-1.500" fill="none" stroke="#555" stroke-width=".7"/><path d="M2 2l3.500 3.500M5.500 2l-3.500 3.500" stroke="#999" stroke-width=".5"/></svg>
<div style="left:0px;top:544px;width:1024px;height:25px;background:transparent;background:linear-gradient(90deg,#d2e8f1 0%,#dde8f1 8%,#e7e5f0 14%,#f2e9e7 20%,#f1eee0 25%,#eef1de 27%,#edf2ee 31%,#eef1f4 36%,#f0eff3 46%,#f3e8ea 54%,#f4e6e2 63%,#f4e4d7 69%,#e6ecd8 72.500%,#cdf1da 76%,#c6f1da 84%,#cdf2de 92%,#def3e9 100%)"></div>
<div style="left:0px;top:544px;width:1024px;height:0.8px;background:rgba(255,255,255,.55);"></div>
<div style="left:662.4px;top:548px;width:25px;height:22px;background:rgba(255,255,255,.45);border-radius:2.500px"></div>
<svg style="left:343.8px;top:553px;" width="15.6" height="16" viewBox="0 0 15.6 16"><defs><linearGradient id="wl" x1="0" y1="0" x2="1" y2="1"><stop offset="0" stop-color="#35b6f2"/><stop offset="1" stop-color="#0f73d0"/></linearGradient></defs><rect x="0" y="0" width="7.400" height="7.400" fill="url(#wl)"/><rect x="8.200" y="0" width="7.400" height="7.400" fill="url(#wl)"/><rect x="0" y="8.200" width="7.400" height="7.400" fill="url(#wl)"/><rect x="8.200" y="8.200" width="7.400" height="7.400" fill="url(#wl)"/></svg>
<svg style="left:373px;top:552px;" width="16" height="17" viewBox="0 0 16 17"><circle cx="9" cy="6.500" r="5" fill="none" stroke="#2b2b2b" stroke-width="1.600"/><path d="M5.500 10.500L1.200 15.200" stroke="#2b2b2b" stroke-width="2" stroke-linecap="round"/></svg>
<svg style="left:402.5px;top:553px;" width="16" height="16" viewBox="0 0 16 16"><rect x="5" y="0.500" width="10.500" height="10" rx="1" fill="#f4f4f4" opacity=".95"/><rect x="5" y="4.500" width="6.500" height="6" fill="#b5b5b5"/><rect x="0.500" y="4.500" width="11" height="10.500" rx="1" fill="#2a2a2a"/><rect x="5" y="4.500" width="6.500" height="6" fill="#a9a9a9"/></svg>
<svg style="left:431.7px;top:553px;" width="16.2" height="14.5" viewBox="0 0 16.2 14.5"><rect x="0.600" y="0.600" width="15" height="13.300" rx="1.500" fill="#1d6fd0" stroke="#1a5fb8" stroke-width=".8"/><rect x="1.800" y="1.800" width="5.500" height="11" fill="#f5f8fc"/><rect x="8.300" y="1.800" width="6.200" height="5" fill="#5fc0f5"/><rect x="8.300" y="7.800" width="6.200" height="5" fill="#2b93e6"/></svg>
<svg style="left:461.5px;top:553.5px;" width="15" height="15.5" viewBox="0 0 15 15.5"><path d="M7.500 0.500a7 7 0 1 1-3.500 13l-3.500 1.500l1-3.500a7 7 0 0 1 6-11z" fill="#7a5fd0"/><rect x="3.800" y="5" width="5.500" height="5" rx="1" fill="#fff"/><path d="M9.700 6.800l2.300-1.600v4.600l-2.300-1.600z" fill="#fff"/></svg>
<svg style="left:490.5px;top:552.5px;" width="16.5" height="16.5" viewBox="0 0 16.5 16.5"><defs><linearGradient id="eg" x1="0" y1="1" x2="1" y2="0"><stop offset="0" stop-color="#0c59a4"/><stop offset=".5" stop-color="#1b9de2"/><stop offset="1" stop-color="#5de07a"/></linearGradient></defs><circle cx="8.200" cy="8.200" r="8" fill="url(#eg)"/><path d="M4.500 9.500c0-3 2.500-4.500 5-4.500c3 0 4.500 2 4.300 4h-6c0 2 2 3.500 5 2.500c-1.500 2.500-5 3-7 1c-1-1-1.300-2-1.300-3z" fill="#f2f8fc" opacity=".95"/></svg>
<svg style="left:520.3px;top:553.3px;" width="16.2" height="15" viewBox="0 0 16.2 15"><path d="M0.500 1.500h5.500l1.500 1.800h8.200v11h-15.200z" fill="#f5b92a"/><rect x="0.500" y="4.500" width="15.200" height="9.800" rx=".8" fill="#fcd24a"/><rect x="0.500" y="11" width="15.200" height="3.500" fill="#2b8de0"/><rect x="5" y="10" width="6" height="1.800" fill="#1a6fc4"/></svg>
<svg style="left:549.5px;top:552px;" width="18" height="17" viewBox="0 0 18 17"><circle cx="7.500" cy="9.500" r="7.300" fill="#e94335"/><path d="M7.500 9.500L1.200 5.800a7.300 7.300 0 0 0 5 10.900z" fill="#34a853"/><path d="M7.500 9.500l-1.300 7.200a7.300 7.300 0 0 0 8.300-9.700z" fill="#fbbc05"/><circle cx="7.500" cy="9.500" r="3.300" fill="#fff"/><circle cx="7.500" cy="9.500" r="2.600" fill="#4285f4"/><circle cx="13.200" cy="4.600" r="4.400" fill="#5a5048"/><circle cx="13.200" cy="3.600" r="1.800" fill="#c9b8a8"/><path d="M10.200 7.500c1-2 5-2 6 0" fill="#8a7a6c"/></svg>
<svg style="left:578.5px;top:550.5px;" width="19" height="18" viewBox="0 0 19 18"><path d="M7.500 3.500c4 0 6.800 2.500 6.800 6.500s-2.800 6.500-6.800 6.500c-0.800 0-1.500-0.100-2.200-0.300l-2.300 1.800v-3c-1.500-1.200-2.300-3-2.300-5c0-4 2.800-6.500 6.800-6.500z" fill="#7d5be0"/><path d="M5 7.500c0 3 2.500 5.500 5.500 5.500l0.800-1.300l-1.600-1l-0.800 0.600c-1-0.500-1.700-1.200-2.200-2.200l0.600-0.800l-1-1.600z" fill="#fff"/><circle cx="13.800" cy="4.800" r="4.600" fill="#ee7f7f"/><text x="13.800" y="7" text-anchor="middle" font-family="Liberation Sans, sans-serif" font-size="6" fill="#fff">45</text></svg>
<svg style="left:608.6px;top:553.2px;" width="14.6" height="14.6" viewBox="0 0 14.6 14.6"><rect x="0" y="0" width="14.600" height="14.600" rx="3.600" fill="#4a8cf7"/><rect x="2.800" y="4.800" width="6" height="5" rx="1.200" fill="#fff"/><path d="M9.300 6.700l2.600-1.800v4.800l-2.600-1.800z" fill="#fff"/></svg>
<svg style="left:637px;top:553.3px;" width="16.2" height="15" viewBox="0 0 16.2 15"><rect x="4" y="0.300" width="12" height="14.400" rx="1" fill="#2b7cd3"/><rect x="4" y="0.300" width="12" height="3.800" fill="#41a5ee"/><rect x="4" y="7.500" width="12" height="3.600" fill="#185abd"/><rect x="4" y="11" width="12" height="3.700" fill="#103f91"/><rect x="0.300" y="3.300" width="8.500" height="8.500" rx=".8" fill="#185abd"/><text x="4.550" y="10" text-anchor="middle" font-family="Liberation Sans, sans-serif" font-weight="700" font-size="6" fill="#fff">W</text></svg>
<svg style="left:666px;top:553px;" width="17" height="16" viewBox="0 0 17 16"><circle cx="9.500" cy="8" r="7.500" fill="#ed6c47"/><path d="M9.500 0.500a7.500 7.500 0 0 1 7.500 7.500h-7.500z" fill="#ff8f6b"/><path d="M17 8a7.500 7.500 0 0 1-12.500 5.600l5-5.600z" fill="#d35230"/><rect x="0.300" y="3.500" width="8.500" height="8.500" rx=".8" fill="#c43e1c"/><text x="4.550" y="10.200" text-anchor="middle" font-family="Liberation Sans, sans-serif" font-weight="700" font-size="6" fill="#fff">P</text></svg>
<svg style="left:822.8px;top:557.5px;" width="9.5" height="5.5" viewBox="0 0 9.5 5.5"><path d="M0.500 5L4.700 0.800L9 5" fill="none" stroke="#2f2f2f" stroke-width="1"/></svg>
<svg style="left:838px;top:555.3px;" width="11.5" height="8.5" viewBox="0 0 11.5 8.5"><defs><linearGradient id="cl" x1="0" y1="0" x2="0" y2="1"><stop offset="0" stop-color="#ececec"/><stop offset="1" stop-color="#8e8e8e"/></linearGradient></defs><path d="M2.800 7.800a2.600 2.600 0 0 1-0.300-5.100a3.400 3.400 0 0 1 6.400 0.500a2.300 2.300 0 0 1 0 4.600z" fill="url(#cl)" stroke="#3a3a3a" stroke-width=".8"/></svg>
<svg style="left:853.5px;top:553.8px;" width="13" height="13" viewBox="0 0 13 13"><path d="M1.500 6a5 5 0 0 1 9-2.600M11.500 6.800a5 5 0 0 1-9.200 2.400" fill="none" stroke="#3a3a3a" stroke-width=".9"/><path d="M10.800 0.800v2.800h-2.800M2 12v-2.800h2.800" fill="none" stroke="#3a3a3a" stroke-width=".9"/><circle cx="9.300" cy="9.600" r="2.900" fill="#f7901e"/></svg>
<svg style="left:874.5px;top:554.3px;" width="8" height="12.5" viewBox="0 0 8 12.5"><rect x="2.200" y="0.500" width="3.600" height="7.200" rx="1.800" fill="#6aa6ee" stroke="#2a6fc9" stroke-width=".8"/><path d="M0.500 5.800a3.500 3.500 0 0 0 7 0M4 9.400v2.600" fill="none" stroke="#2a6fc9" stroke-width=".9"/></svg>
<div class="t" style="transform:translate(896.00px,556.20px) scaleX(0.8556);font-size:8.6px;color:#3a3a3a;">BOS</div>
<svg style="left:925px;top:555.5px;" width="10" height="8" viewBox="0 0 10 8"><path d="M0.500 3a6.500 6.500 0 0 1 9 0M2 4.800a4.400 4.400 0 0 1 6 0M3.500 6.300a2.200 2.200 0 0 1 3 0" fill="none" stroke="#3a3a3a" stroke-width=".8"/><circle cx="5" cy="7.300" r=".7" fill="#3a3a3a"/></svg>
<svg style="left:939px;top:555px;" width="12" height="9" viewBox="0 0 12 9"><path d="M0.500 3h2l2.500-2.300v7.600l-2.500-2.300h-2z" fill="none" stroke="#3a3a3a" stroke-width=".8"/><path d="M6.500 2.800a2.500 2.500 0 0 1 0 3.400M8 1.500a4.500 4.500 0 0 1 0 6" fill="none" stroke="#555" stroke-width=".7"/><path d="M9.800 0.500a6 6 0 0 1 0 8" fill="none" stroke="#999" stroke-width=".6"/></svg>
<svg style="left:954.5px;top:555px;" width="13" height="9.5" viewBox="0 0 13 9.5"><rect x="3.300" y="2.600" width="8.600" height="5.600" rx="1" fill="#2a2a2a"/><rect x="11.900" y="4.200" width="1" height="2.400" fill="#2a2a2a"/><rect x="4.500" y="3.800" width="4.500" height="3.200" fill="#6a6a6a"/><path d="M0.800 0.800h2.800v2.600h-1v1.400h-0.800v-1.400h-1z" fill="#2a2a2a"/></svg>
<div class="t" style="transform:translate(994.40px,550.50px) scaleX(0.8619);font-size:8.3px;color:#2f2f2f;">10:55</div>
<div class="t" style="transform:translate(976.60px,560.70px) scaleX(0.9205);font-size:8.3px;color:#2f2f2f;">8. 4. 2022.</div>
<div style="left:281.3px;top:-4px;width:686.6px;height:39.7px;background:#1c1d20;border-radius:4.500px"></div>
<svg style="left:300px;top:4px;" width="18" height="17" viewBox="0 0 18 17"><rect x="6.300" y="1.500" width="5" height="9" rx="2.500" fill="#bdbdbd"/><path d="M4 8a4.800 4.800 0 0 0 9.600 0M8.800 12.800v2.500M6.300 15.500h5" fill="none" stroke="#bdbdbd" stroke-width="1"/><path d="M1 16.300L16.300 1" stroke="#e0474f" stroke-width="1.100"/></svg>
<svg style="left:324.3px;top:8.3px;" width="6" height="4" viewBox="0 0 6 4"><path d="M0.600 0.600L3 3L5.400 0.600" fill="none" stroke="#d0d0d0" stroke-width="1"/></svg>
<div class="t" style="transform:translate(293.70px,23.90px) scaleX(0.9867);font-size:8.7px;color:#d6d6d6;">Unmute</div>
<svg style="left:358px;top:4px;" width="19" height="17" viewBox="0 0 19 17"><rect x="1.200" y="4.300" width="11.300" height="9" rx="1.800" fill="#b5b5b5"/><path d="M13.200 7.500l4-2.800v9l-4-2.800z" fill="#b5b5b5"/><path d="M1.500 16.500L17 1" stroke="#e0474f" stroke-width="1.100"/></svg>
<svg style="left:385.5px;top:8.3px;" width="6" height="4" viewBox="0 0 6 4"><path d="M0.600 0.600L3 3L5.400 0.600" fill="none" stroke="#d0d0d0" stroke-width="1"/></svg>
<div class="t" style="transform:translate(346.70px,23.90px) scaleX(0.9442);font-size:8.7px;color:#d6d6d6;">Start Video</div>
<svg style="left:417px;top:5.5px;" width="13" height="15" viewBox="0 0 13 15"><path d="M6.500 0.300l6 2.200v4.500c0 4-2.500 6.500-6 7.700c-3.500-1.200-6-3.700-6-7.700v-4.500z" fill="#c9c9c9"/><path d="M6.500 1.800v5.700h4.700v-4z" fill="#2a2b2e"/><path d="M6.500 7.500v5.800c-2.500-1-4.500-3-4.700-5.800z" fill="#2a2b2e"/></svg>
<div class="t" style="transform:translate(407.70px,23.90px) scaleX(0.9406);font-size:8.7px;color:#d6d6d6;">Security</div>
<svg style="left:484.5px;top:6.5px;" width="17" height="13" viewBox="0 0 17 13"><circle cx="5.500" cy="3.300" r="2.900" fill="#c4c4c4"/><path d="M0.300 12.500c0-3.500 2-5.300 5.200-5.300s5.200 1.800 5.200 5.300z" fill="#c4c4c4"/><circle cx="12.300" cy="4.300" r="2.300" fill="#c4c4c4"/><path d="M11.300 12.500c0-2 0-3-1-4.300c0.600-0.300 1.300-0.500 2-0.500c2.600 0 4.200 1.500 4.200 4.800z" fill="#c4c4c4"/></svg>
<div class="t" style="transform:translate(504.00px,4.50px);font-size:8.3px;color:#c8c8c8;">36</div>
<svg style="left:524.8px;top:8.3px;" width="6" height="4" viewBox="0 0 6 4"><path d="M0.600 0.600L3 3L5.400 0.600" fill="none" stroke="#d0d0d0" stroke-width="1"/></svg>
<div class="t" style="transform:translate(470.70px,23.90px) scaleX(0.9622);font-size:8.7px;color:#d6d6d6;">Participants</div>
<svg style="left:552.5px;top:6.5px;" width="14" height="13" viewBox="0 0 14 13"><path d="M2.500 0.400h9a2.200 2.200 0 0 1 2.200 2.200v4.800a2.200 2.200 0 0 1-2.200 2.200h-5l-3.200 2.800l0.300-2.800h-1.100a2.200 2.200 0 0 1-2.200-2.200v-4.800a2.200 2.200 0 0 1 2.200-2.200z" fill="#c4c4c4"/></svg>
<div class="t" style="transform:translate(551.00px,23.90px) scaleX(0.8842);font-size:8.7px;color:#d6d6d6;">Chat</div>
<svg style="left:598.5px;top:6.5px;" width="13" height="12.5" viewBox="0 0 13 12.5"><rect x="0.300" y="6.300" width="3.200" height="6" rx=".4" fill="#c4c4c4"/><rect x="4.700" y="0.300" width="3.200" height="12" rx=".4" fill="#c4c4c4"/><rect x="9.100" y="3.300" width="3.200" height="9" rx=".4" fill="#c4c4c4"/></svg>
<div class="t" style="transform:translate(596.60px,23.90px) scaleX(0.9053);font-size:8.7px;color:#d6d6d6;">Polls</div>
<svg style="left:648.7px;top:6.8px;" width="16.2" height="12" viewBox="0 0 16.2 12"><rect x="0" y="0" width="16.200" height="12" rx="2" fill="#23d160"/><path d="M8.100 9.500v-6.500M5.600 5.300l2.500-2.500l2.500 2.500" fill="none" stroke="#0d2a14" stroke-width="1.100"/></svg>
<svg style="left:674.3px;top:8.3px;" width="6" height="4" viewBox="0 0 6 4"><path d="M0.600 0.600L3 3L5.400 0.600" fill="none" stroke="#d0d0d0" stroke-width="1"/></svg>
<div class="t" style="transform:translate(636.60px,23.90px) scaleX(0.9233);font-size:8.7px;color:#23d160;">New Share</div>
<div style="left:710.4px;top:7.5px;width:2.5px;height:10.5px;background:#c4c4c4;border-radius:.6px"></div>
<div style="left:717.6px;top:7.5px;width:2.5px;height:10.5px;background:#c4c4c4;border-radius:.6px"></div>
<div class="t" style="transform:translate(693.70px,23.90px) scaleX(0.8860);font-size:8.7px;color:#d6d6d6;">Pause Share</div>
<svg style="left:764.5px;top:6.8px;" width="12" height="12" viewBox="0 0 12 12"><path d="M0.300 11.700l1-3.700l6.700-6.700l2.700 2.700l-6.700 6.700z" fill="#c4c4c4"/><path d="M8.800 0.500a1.300 1.300 0 0 1 1.800 0l0.900 0.900a1.300 1.300 0 0 1 0 1.800l-0.600 0.600l-2.700-2.700z" fill="#c4c4c4"/><path d="M7.600 1.900l2.500 2.500" stroke="#1c1d20" stroke-width=".7"/></svg>
<div class="t" style="transform:translate(752.70px,23.90px) scaleX(0.9886);font-size:8.7px;color:#d6d6d6;">Annotate</div>
<svg style="left:829.7px;top:5.5px;" width="10" height="14.5" viewBox="0 0 10 14.5"><rect x="0.300" y="0.300" width="9.400" height="14" rx="4.500" fill="#c4c4c4"/><rect x="4.300" y="3" width="1.400" height="3.500" rx=".7" fill="#1c1d20"/></svg>
<div class="t" style="transform:translate(805.70px,23.90px) scaleX(0.9361);font-size:8.7px;color:#d6d6d6;">Remote Control</div>
<svg style="left:893px;top:8px;" width="11.5" height="11.5" viewBox="0 0 11.5 11.5"><path d="M0.600 4.500v-2a2 2 0 0 1 2-2h2M0.600 7v0M11 7v2a2 2 0 0 1-2 2h-2" fill="none" stroke="#c4c4c4" stroke-width="1"/><circle cx="8.800" cy="2.600" r="1.800" fill="none" stroke="#c4c4c4" stroke-width="1"/><circle cx="2.600" cy="8.800" r="1.800" fill="none" stroke="#c4c4c4" stroke-width="1"/></svg>
<div class="t" style="transform:translate(889.50px,24.10px) scaleX(0.9250);font-size:8.7px;color:#d6d6d6;">Apps</div>
<div style="left:940.2px;top:11.8px;width:2px;height:2px;background:#d0d0d0;border-radius:1px"></div>
<div style="left:945.7px;top:11.8px;width:2px;height:2px;background:#d0d0d0;border-radius:1px"></div>
<div style="left:951.2px;top:11.8px;width:2px;height:2px;background:#d0d0d0;border-radius:1px"></div>
<div class="t" style="transform:translate(936.60px,24.10px) scaleX(0.9700);font-size:8.7px;color:#d6d6d6;">More</div>
<div style="left:510.5px;top:35.6px;width:168.5px;height:13.9px;background:#23d25b;border-radius:0 0 0 2.500px"></div>
<div style="left:678.8px;top:35.6px;width:60.4px;height:13.7px;background:#e0272b;border-radius:0 0 2.500px 0"></div>
<svg style="left:515px;top:38.5px;" width="7" height="8" viewBox="0 0 7 8"><path d="M5.500 0.500c-3 0-5 1.500-4.500 4.500l-0.800 2l2-0.500c2.500 0.500 3.800-1 3.300-3c-1 0.800-2 1-3 0.800c0.500-1.500 1.500-2.800 3-3.800z" fill="#0a3f18"/></svg>
<div class="t" style="transform:translate(543.60px,38.20px) scaleX(0.9231);font-size:8.3px;font-weight:700;color:#0b3315;">You are screen sharing</div>
<svg style="left:651px;top:38px;" width="8" height="9.5" viewBox="0 0 8 9.5"><rect x="2.600" y="0.500" width="2.600" height="5" rx="1.300" fill="#0c4a1c"/><path d="M1.300 4.500a2.700 2.700 0 0 0 5.400 0M4 7.200v1.800" fill="none" stroke="#0c4a1c" stroke-width=".8"/><path d="M0.500 9L7.300 0.500" stroke="#0c4a1c" stroke-width=".9"/></svg>
<svg style="left:664.8px;top:38.5px;" width="7" height="8.5" viewBox="0 0 7 8.5"><path d="M3.500 0.200l3.300 1.200v2.600c0 2.200-1.400 3.600-3.300 4.300c-1.900-0.700-3.300-2.100-3.300-4.300v-2.600z" fill="#0c4a1c"/><path d="M2 4.200l1.200 1.200l2-2.200" fill="none" stroke="#23d25b" stroke-width=".8"/></svg>
<div style="left:683.5px;top:39.7px;width:5.3px;height:5px;background:#fff;border-radius:.5px"></div>
<div class="t" style="transform:translate(693.60px,37.80px) scaleX(0.9429);font-size:8.3px;color:#fff;">Stop Share</div>
<div style="left:422.5px;top:61.3px;width:180.6px;height:30.4px;background:rgba(38,38,38,.96);border-radius:7.500px"></div>
<div class="t" style="transform:translate(434.00px,72.90px) scaleX(0.9667);font-size:8.5px;color:#f0f0f0;">Participants can now see your screen</div>
<svg style="left:584.5px;top:73.5px;" width="5.5" height="5.5" viewBox="0 0 5.5 5.5"><path d="M0.500 0.500l4.500 4.500M5 0.500l-4.500 4.500" stroke="#f0f0f0" stroke-width=".9"/></svg>
<div style="left:866px;top:56.8px;width:152.3px;height:39.7px;background:#1a1c1f;border-radius:2.500px;box-shadow:0 0 1.500px rgba(0,0,0,.7)"></div>
<div style="left:866px;top:75px;width:152.3px;height:21.5px;background:#232d38;border-radius:0 0 2.500px 2.500px"></div>
<div style="left:871px;top:68.1px;width:8.2px;height:2.3px;background:#2d8cff;border-radius:.5px"></div>
<div style="left:889.5px;top:64.6px;width:8.5px;height:5.8px;background:#bdbdbd;border-radius:1px"></div>
<div style="left:908.2px;top:62px;width:8.5px;height:3.7px;background:#bdbdbd;border-radius:1px"></div>
<div style="left:908.2px;top:66.8px;width:8.5px;height:3.7px;background:#bdbdbd;border-radius:1px"></div>
<svg style="left:926.3px;top:61.5px;" width="10" height="10" viewBox="0 0 10 10"><rect x="0.0" y="0.0" width="2.700" height="2.600" rx=".4" fill="#d0d0d0"/><rect x="3.5" y="0.0" width="2.700" height="2.600" rx=".4" fill="#d0d0d0"/><rect x="7.0" y="0.0" width="2.700" height="2.600" rx=".4" fill="#d0d0d0"/><rect x="0.0" y="3.4" width="2.700" height="2.600" rx=".4" fill="#d0d0d0"/><rect x="3.5" y="3.4" width="2.700" height="2.600" rx=".4" fill="#d0d0d0"/><rect x="7.0" y="3.4" width="2.700" height="2.600" rx=".4" fill="#d0d0d0"/><rect x="0.0" y="6.8" width="2.700" height="2.600" rx=".4" fill="#d0d0d0"/><rect x="3.5" y="6.8" width="2.700" height="2.600" rx=".4" fill="#d0d0d0"/><rect x="7.0" y="6.8" width="2.700" height="2.600" rx=".4" fill="#d0d0d0"/></svg>
<div class="t" style="transform:translate(879.00px,81.80px) scaleX(0.9234);font-size:8.7px;color:#d8d8d8;white-space:pre;">Talking:  Dubravka  Kocijan  Herci...</div>
</div>
</body>
</html>
